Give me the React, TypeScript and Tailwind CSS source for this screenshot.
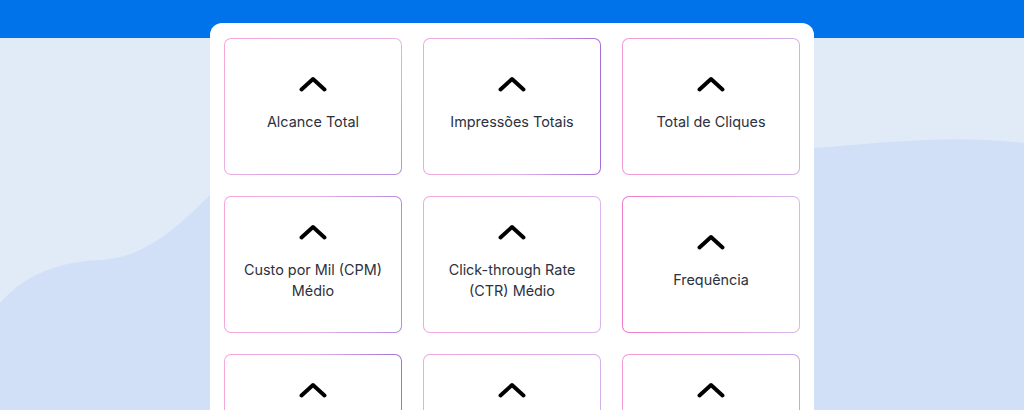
import React from "react";

const cards: { label: string; grad: string }[] = [
  { label: "Alcance Total", grad: "bg-linear-to-br from-[#f6a6db] via-[#eab0e4] to-[#b98fe0]" },
  { label: "Impressões Totais", grad: "bg-linear-to-r from-[#f6a6db] via-[#e4b6ea] to-[#a76fd6]" },
  { label: "Total de Cliques", grad: "bg-linear-to-r from-[#f39ad6] to-[#d3b0ea]" },
  { label: "Custo por Mil (CPM) Médio", grad: "bg-linear-to-r from-[#f6a6db] via-[#e7b4e8] to-[#b98ae0]" },
  { label: "Click-through Rate (CTR) Médio", grad: "bg-linear-to-r from-[#f6a6db] to-[#d9b6ec]" },
  { label: "Frequência", grad: "bg-linear-to-r from-[#f07ccc] to-[#d7b8ec]" },
  { label: "Custo por Clique (CPC) Médio", grad: "bg-linear-to-r from-[#f6a6db] via-[#e4b0e6] to-[#a170d4]" },
  { label: "Taxa de Conversão (CVR) Média", grad: "bg-linear-to-r from-[#f6a6db] to-[#d3b0ea]" },
  { label: "Custo por Resultado (CPR) Médio", grad: "bg-linear-to-r from-[#f39ad6] to-[#c9a6ea]" },
];

function Chevron() {
  return (
    <svg width="28" height="16" viewBox="0 0 28 16" fill="none">
      <polyline
        points="2.5,13.5 14,3 25.5,13.5"
        stroke="#000"
        strokeWidth="3.9"
        strokeLinecap="round"
        strokeLinejoin="round"
      />
    </svg>
  );
}

export default function App() {
  return (
    <div
      className="relative w-full h-[410px] overflow-hidden bg-[#e1ebf8]"
      style={{ fontFamily: "Inter, 'Noto Sans', sans-serif" }}
    >
      <svg
        className="absolute inset-0 pointer-events-none"
        width="1024"
        height="410"
        viewBox="0 0 1024 410"
      >
        <path
          d="M0,303 C20,280 50,262 100,260 C140,258 170,235 210,195 C300,110 600,160 814,148 C880,143 950,134 1024,143 L1024,410 L0,410 Z"
          fill="#d2e0f7"
        />
      </svg>
      <div className="relative h-[38px] bg-[#0073ea]" />
      <div className="relative mx-auto -mt-[15px] w-[604px] rounded-t-[12px] bg-white px-[14px] pt-[15px] pb-6">
        <div className="grid grid-cols-3 gap-x-[21px] gap-y-[21px]">
          {cards.map((c) => (
            <div key={c.label} className={`${c.grad} rounded-[7px] p-px h-[137px]`}>
              <div className="flex h-full w-full flex-col items-center justify-center rounded-[6px] bg-white px-4 pb-[5px]">
                <Chevron />
                <div className="mt-[19px] text-center text-[14.4px] leading-[21px] text-[#2c3140]">
                  {c.label}
                </div>
              </div>
            </div>
          ))}
        </div>
      </div>
    </div>
  );
}
